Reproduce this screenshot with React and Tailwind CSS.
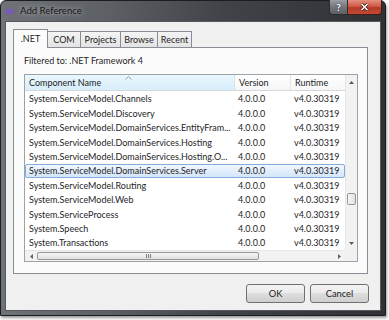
const rows = [
  "System.ServiceModel.Channels",
  "System.ServiceModel.Discovery",
  "System.ServiceModel.DomainServices.EntityFram...",
  "System.ServiceModel.DomainServices.Hosting",
  "System.ServiceModel.DomainServices.Hosting.O...",
  "System.ServiceModel.DomainServices.Server",
  "System.ServiceModel.Routing",
  "System.ServiceModel.Web",
  "System.ServiceProcess",
  "System.Speech",
  "System.Transactions",
];

function Tri({ dir }) {
  const pts = {
    up: "0,4 3.5,0 7,4",
    down: "0,0 3.5,4 7,0",
    left: "4,0 0,3.5 4,7",
    right: "0,0 4,3.5 0,7",
  }[dir];
  const vert = dir === "up" || dir === "down";
  return (
    <svg width={vert ? 5 : 3} height={vert ? 3 : 5} viewBox={vert ? "0 0 7 4" : "0 0 4 7"}>
      <polygon points={pts} fill="#5a5a5a" />
    </svg>
  );
}

function Tab({ w, children }) {
  return (
    <div
      className="h-[16px] border-t border-r border-[#898c95] bg-[linear-gradient(#f4f4f4,#e3e3e3)] flex items-center justify-center text-[#1e1e1e]"
      style={{ width: w }}
    >
      {children}
    </div>
  );
}

export default function App() {
  return (
    <div className="w-[389px] h-[320px] bg-white overflow-hidden font-['Lato','Noto_Sans',sans-serif] text-[9px] text-[#1e1e1e]">
      <div className="w-[386px] h-[316px] flex flex-col rounded-t-[6px] border border-[#1c1d20] bg-[linear-gradient(90deg,#6f7378_0%,#5c6065_28%,#404348_58%,#2f3135_100%)] shadow-[1px_2px_3px_rgba(0,0,0,0.4)]">
        {/* title bar */}
        <div className="h-[20px] flex items-start pr-[3px]">
          <div className="flex items-center h-[20px] pl-[4px] gap-[6px]">
            <svg width="9" height="7" viewBox="0 0 9 7">
              <path
                d="M1 3.5 C1 1 3.5 1 4.5 3.5 C5.5 6 8 6 8 3.5 C8 1 5.5 1 4.5 3.5 C3.5 6 1 6 1 3.5 Z"
                fill="none"
                stroke="#7a55c8"
                strokeWidth="1.6"
              />
            </svg>
            <span className="text-[9.6px] text-[#161616] [text-shadow:0_0_5px_rgba(200,203,207,0.95)]">
              Add Reference
            </span>
          </div>
          <div className="ml-auto flex -mt-px">
            <div className="w-[19px] h-[15px] rounded-bl-[4px] border border-[#2a2c30] border-t-0 bg-[linear-gradient(#9a9ea3,#72767b_50%,#5d6166)] flex items-center justify-center text-[10px] font-bold text-white leading-none [text-shadow:0_0_2px_#222]">
              ?
            </div>
            <div className="w-[34px] h-[15px] rounded-br-[4px] border border-l-0 border-t-0 border-[#4a1a14] bg-[linear-gradient(#e3907f,#cf5a45_45%,#b43a26_55%,#c24a33)] flex items-center justify-center">
              <svg width="9" height="8" viewBox="0 0 9 8">
                <path d="M1.5 1 L7.5 7 M7.5 1 L1.5 7" stroke="#3a1510" strokeWidth="3" />
                <path d="M1.5 1 L7.5 7 M7.5 1 L1.5 7" stroke="#ffffff" strokeWidth="1.6" />
              </svg>
            </div>
          </div>
        </div>

        {/* client frame */}
        <div className="flex-1 px-[4px] pb-[4px]">
          <div className="h-full bg-[#f0f0f0] border border-[#55585d] flex flex-col pl-[7px] pr-[11px] pt-[7px]">
            {/* tabs */}
            <div className="h-[18px] flex items-end">
              <div className="w-[35px] h-[19px] mb-[-1px] relative z-10 border border-b-0 border-[#898c95] bg-[#fbfbfb] flex items-center justify-center">
                .NET
              </div>
              <Tab w={33}>COM</Tab>
              <Tab w={40}>Projects</Tab>
              <Tab w={37}>Browse</Tab>
              <Tab w={34}>Recent</Tab>
            </div>

            {/* panel */}
            <div className="w-[355px] h-[227px] border border-[#898c95] bg-[#fbfbfb] pl-[10px] pt-[6px] flex flex-col">
              <div className="h-[14px] leading-[14px]">Filtered to: .NET Framework 4</div>

              {/* list */}
              <div className="mt-[6px] w-[334px] h-[188px] border border-[#9da1a8] bg-white flex flex-col">
                <div className="h-[175px] flex">
                  <div className="w-[320px] flex flex-col">
                    {/* header */}
                    <div className="h-[16px] flex border-b border-[#d5d7da] leading-[15px]">
                      <div className="relative w-[210px] pl-[4px] border-r border-[#cfe3f0] bg-[linear-gradient(#eaf6fd,#d7eefb)]">
                        Component Name
                        <svg className="absolute left-[100px] top-[1px]" width="7" height="4" viewBox="0 0 7 4">
                          <path d="M0.5 3.5 L3.5 0.5 L6.5 3.5" fill="none" stroke="#8aa6bd" strokeWidth="1" />
                        </svg>
                      </div>
                      <div className="w-[56px] pl-[4px] border-r border-[#e3e5e8] bg-[linear-gradient(#ffffff,#f5f6f7)]">
                        Version
                      </div>
                      <div className="flex-1 pl-[4px] bg-[linear-gradient(#ffffff,#f5f6f7)]">Runtime</div>
                    </div>
                    {/* rows */}
                    <div className="flex-1 overflow-hidden pt-[1px]">
                      {rows.map((name, i) => (
                        <div
                          key={name}
                          className={
                            "h-[14.4px] flex items-center border rounded-[2px] whitespace-nowrap " +
                            (i === 5
                              ? "border-[#84acdd] bg-[linear-gradient(#f1f7fe,#d3e5fa)]"
                              : "border-transparent")
                          }
                        >
                          <div className="w-[209px] pl-[3px] overflow-hidden">{name}</div>
                          <div className="w-[56px] pl-[3px]">4.0.0.0</div>
                          <div className="flex-1 pl-[3px]">v4.0.30319</div>
                        </div>
                      ))}
                    </div>
                  </div>
                  {/* vertical scrollbar */}
                  <div className="w-[12px] flex flex-col bg-[#f2f2f2] border-l border-[#e6e6e6]">
                    <div className="h-[14px] flex items-center justify-center">
                      <Tri dir="up" />
                    </div>
                    <div className="flex-1 flex flex-col items-center">
                      <div className="mt-[104px] w-[9px] h-[12px] rounded-[2px] border border-[#979797] bg-[linear-gradient(90deg,#f6f6f6,#e0e0e0)]" />
                    </div>
                    <div className="h-[14px] flex items-center justify-center">
                      <Tri dir="down" />
                    </div>
                  </div>
                </div>
                {/* horizontal scrollbar */}
                <div className="flex-1 flex">
                  <div className="w-[320px] flex bg-[#f2f2f2] border-t border-[#e6e6e6]">
                    <div className="w-[12px] flex items-center justify-center">
                      <Tri dir="left" />
                    </div>
                    <div className="w-[222px] my-[1px] rounded-[2px] border border-[#979797] bg-[linear-gradient(#f6f6f6,#e0e0e0)] flex items-center justify-center gap-[1px]">
                      <div className="w-px h-[4px] bg-[#7d7d7d]" />
                      <div className="w-px h-[4px] bg-[#7d7d7d]" />
                      <div className="w-px h-[4px] bg-[#7d7d7d]" />
                    </div>
                    <div className="flex-1" />
                    <div className="w-[12px] flex items-center justify-center">
                      <Tri dir="right" />
                    </div>
                  </div>
                  <div className="flex-1 bg-[#f0f0f0]" />
                </div>
              </div>
            </div>

            {/* buttons */}
            <div className="mt-[10px] flex justify-end gap-[5px]">
              <button className="w-[59px] h-[19px] rounded-[3px] border border-[#707070] bg-[linear-gradient(#f3f3f3_0%,#ebebeb_50%,#dddddd_50%,#cfcfcf_100%)] text-[9.3px] text-[#1e1e1e] leading-none">
                OK
              </button>
              <button className="w-[59px] h-[19px] rounded-[3px] border border-[#707070] bg-[linear-gradient(#f3f3f3_0%,#ebebeb_50%,#dddddd_50%,#cfcfcf_100%)] text-[9.3px] text-[#1e1e1e] leading-none">
                Cancel
              </button>
            </div>
          </div>
        </div>
      </div>
    </div>
  );
}
